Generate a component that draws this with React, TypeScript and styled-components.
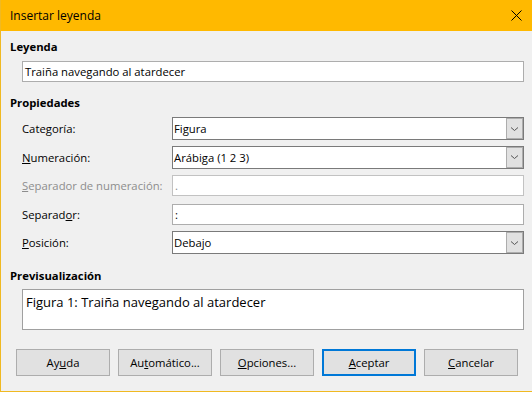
import { Fragment } from "react";
import styled, { createGlobalStyle } from "styled-components";

const GlobalStyle = createGlobalStyle`
  html, body {
    margin: 0;
    padding: 0;
    background: #ffffff;
  }
  body {
    font-family: "Open Sans", "Noto Sans", "Liberation Sans", sans-serif;
    font-size: 11.3px;
    color: #000;
  }
  * {
    box-sizing: border-box;
  }
`;

const Window = styled.div`
  width: 532px;
  height: 392px;
  background: #f0f0f0;
  border-left: 1px solid #f0b922;
  border-bottom: 1px solid #f0b922;
  display: flex;
  flex-direction: column;
`;

const TitleBar = styled.div`
  height: 31px;
  background: #ffb900;
  display: flex;
  align-items: center;
  justify-content: space-between;
  padding: 0 9px 0 9px;
  font-size: 12px;
  flex-shrink: 0;
`;

const CloseButton = styled.div`
  width: 12px;
  height: 12px;
  display: flex;
  align-items: center;
  justify-content: center;
  margin-right: 1px;
`;

const Content = styled.div`
  padding: 8px 8px 0 9px;
  display: flex;
  flex-direction: column;
`;

const Heading = styled.div<{ $top: number }>`
  font-weight: 700;
  height: 16px;
  line-height: 16px;
  margin-top: ${(p) => p.$top}px;
`;

const TextBox = styled.div<{ $disabled?: boolean }>`
  height: 21px;
  background: #fff;
  border: 1px solid ${(p) => (p.$disabled ? "#c2c2c2" : "#adadad")};
  color: ${(p) => (p.$disabled ? "#8c8c8c" : "#000")};
  padding: 0 2px;
  display: flex;
  align-items: center;
  white-space: nowrap;
`;

const CaptionBox = styled(TextBox)`
  margin: 6px 0 0 12px;
`;

const Grid = styled.div`
  display: grid;
  grid-template-columns: 150px 1fr;
  grid-auto-rows: 23px;
  row-gap: 5.5px;
  align-items: center;
  margin: 6px 0 0 12px;
`;

const Label = styled.div<{ $disabled?: boolean }>`
  color: ${(p) => (p.$disabled ? "#8d8d8d" : "#000")};
  white-space: nowrap;
`;

const Select = styled.div`
  height: 23px;
  background: #fff;
  border: 1px solid #7a7a7a;
  display: flex;
  align-items: stretch;
`;

const SelectValue = styled.div`
  flex: 1;
  padding-left: 1px;
  display: flex;
  align-items: center;
`;

const DropButton = styled.div`
  width: 17px;
  background: #e1e1e1;
  border: 1px solid #adadad;
  display: flex;
  align-items: center;
  justify-content: center;
`;

const Preview = styled.div`
  height: 41px;
  margin: 5px 0 0 12px;
  background: #fff;
  border: 1px solid #a0a0a0;
  font-size: 13px;
  padding: 2px 3px 0;
  line-height: 20px;
`;

const ButtonRow = styled.div`
  display: flex;
  gap: 8px;
  margin: 19px 0 0 6px;
`;

const Button = styled.div<{ $default?: boolean }>`
  width: 94px;
  height: 27px;
  background: #e1e1e1;
  border: ${(p) => (p.$default ? "2px solid #0078d7" : "1px solid #adadad")};
  display: flex;
  align-items: center;
  justify-content: center;
`;

const Chevron = () => (
  <svg width="9" height="6" viewBox="0 0 9 6">
    <path d="M1 1.5 L4.5 4.5 L8 1.5" fill="none" stroke="#555" strokeWidth="1" />
  </svg>
);

const Key = ({ word, at }: { word: string; at: number }) => (
  <>
    {word.slice(0, at)}
    <u>{word[at]}</u>
    {word.slice(at + 1)}
  </>
);

const rows = [
  { label: <Key word="Categoría:" at={4} />, value: "Figura", kind: "select" },
  { label: <Key word="Numeración:" at={0} />, value: "Arábiga (1 2 3)", kind: "select" },
  { label: <Key word="Separador de numeración:" at={0} />, value: ".", kind: "disabled" },
  { label: <Key word="Separador:" at={7} />, value: ":", kind: "text" },
  { label: <Key word="Posición:" at={0} />, value: "Debajo", kind: "select" },
];

const App = () => {
  return (
    <>
      <GlobalStyle />
      <Window>
        <TitleBar>
          <span>Insertar leyenda</span>
          <CloseButton>
            <svg width="11" height="11" viewBox="0 0 11 11">
              <path d="M0.5 0.5 L10.5 10.5 M10.5 0.5 L0.5 10.5" stroke="#000" strokeWidth="1" />
            </svg>
          </CloseButton>
        </TitleBar>
        <Content>
          <Heading $top={0}>Leyenda</Heading>
          <CaptionBox>Traiña navegando al atardecer</CaptionBox>
          <Heading $top={13}>Propiedades</Heading>
          <Grid>
            {rows.map((r, i) => (
              <Fragment key={i}>
                <Label $disabled={r.kind === "disabled"}>{r.label}</Label>
                {r.kind === "select" ? (
                  <Select>
                    <SelectValue>{r.value}</SelectValue>
                    <DropButton>
                      <Chevron />
                    </DropButton>
                  </Select>
                ) : (
                  <TextBox $disabled={r.kind === "disabled"}>{r.value}</TextBox>
                )}
              </Fragment>
            ))}
          </Grid>
          <Heading $top={13.5}>Previsualización</Heading>
          <Preview>Figura 1: Traiña navegando al atardecer</Preview>
          <ButtonRow>
            <Button>
              <Key word="Ayuda" at={2} />
            </Button>
            <Button>
              <Key word="Automático..." at={2} />
            </Button>
            <Button>
              <Key word="Opciones..." at={0} />
            </Button>
            <Button $default>
              <Key word="Aceptar" at={0} />
            </Button>
            <Button>
              <Key word="Cancelar" at={0} />
            </Button>
          </ButtonRow>
        </Content>
      </Window>
    </>
  );
};

export default App;
